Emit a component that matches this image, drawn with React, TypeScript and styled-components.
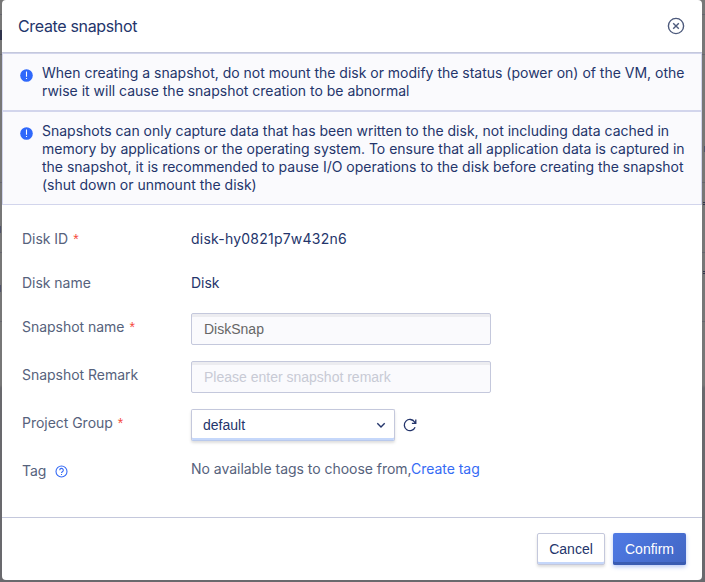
import React from "react";
import styled, { createGlobalStyle } from "styled-components";

const GlobalStyle = createGlobalStyle`
  * { box-sizing: border-box; }
  body {
    margin: 0;
    overflow: hidden;
    font: 14px/18px Inter, sans-serif;
    letter-spacing: -0.03px;
    color: #24356b;
  }
`;

const Backdrop = styled.div`
  position: relative;
  width: 705px;
  height: 582px;
  padding: 0 3px 2px 2px;
  overflow: hidden;
  background: linear-gradient(#777777 0 385px, #69696d 388px);
`;

const PageRule = styled.i<{ $y: number; $side: "left" | "right" }>`
  position: absolute;
  top: ${(p) => p.$y}px;
  ${(p) => p.$side}: 0;
  width: 3px;
  height: 1px;
  background: #66666f;
`;

const PageMark = styled.i<{ $y: number; $h: number; $side: "left" | "right"; $faint?: boolean }>`
  position: absolute;
  top: ${(p) => p.$y}px;
  ${(p) => p.$side}: 0;
  width: ${(p) => (p.$faint ? 1 : 2)}px;
  height: ${(p) => p.$h}px;
  background: ${(p) => (p.$faint ? "#50546a" : "#30344c")};
`;

const Dialog = styled.section`
  position: relative;
  width: 700px;
  height: 580px;
  display: flex;
  flex-direction: column;
  background: #fff;
  border-radius: 4px;
  overflow: hidden;
`;

const Header = styled.header`
  height: 53px;
  flex: none;
  display: flex;
  align-items: center;
  justify-content: space-between;
  padding: 0 17px 0 16px;
  border-bottom: 1px solid #c4c8dc;
`;

const Title = styled.h1`
  margin: 0;
  font-size: 16px;
  line-height: 24px;
  font-weight: 400;
  letter-spacing: -0.34px;
`;

const IconButton = styled.button`
  display: flex;
  padding: 0;
  border: 0;
  background: none;
  color: inherit;
`;

const Alert = styled.div`
  display: flex;
  gap: 9px;
  padding: 10px 0 10px 17px;
  background: #fafafd;
  border: 1px solid #d2d5ec;
  svg { flex: none; margin-top: 5px; }
`;

const Line = styled.span`
  display: block;
  white-space: nowrap;
  letter-spacing: -0.008px;
`;

const Form = styled.div`
  flex: 1;
  padding: 25px 20px 0;
`;

const Row = styled.div<{ $height: number }>`
  height: ${(p) => p.$height}px;
  display: grid;
  grid-template-columns: 169px 1fr;
  align-items: start;
`;

const Label = styled.label`
  display: flex;
  align-items: center;
  color: #56627c;
`;

const DiskId = styled.span`
  letter-spacing: 0.22px;
`;

const Required = styled.span`
  margin-left: 5px;
  font-family: "Liberation Sans", sans-serif;
  color: #f5483b;
`;

const HelpIcon = styled.svg`
  margin: 1px 0 0 9px;
`;

const Input = styled.input`
  width: 300px;
  height: 32px;
  margin-top: -5px;
  padding: 0 12px;
  border: 1px solid #c4c8dc;
  border-radius: 2px;
  outline: 0;
  background: #fafafd;
  box-shadow: inset 0 3px #ececf0;
  font: 14px "Liberation Sans", sans-serif;
  color: #666;
  &::placeholder { color: #c8cad5; opacity: 1; }
`;

const Picker = styled.div`
  display: flex;
  align-items: center;
  gap: 8px;
  margin-top: -5px;
`;

const Select = styled.button`
  width: 204px;
  height: 32px;
  display: flex;
  align-items: center;
  justify-content: space-between;
  padding: 0 8px 0 11px;
  border: 1px solid #c4c8dc;
  border-bottom-color: #b9c9ec;
  border-radius: 2px;
  background: #fff;
  box-shadow: inset 0 -2px #c5d7fa, 0 2px 3px #0002;
  font: 14px "Liberation Sans", sans-serif;
  color: #24356b;
`;

const TagNote = styled.div`
  margin-top: -2px;
  color: #56627c;
`;

const Link = styled.a`
  color: #366bf5;
`;

const Footer = styled.footer`
  height: 63px;
  flex: none;
  display: flex;
  justify-content: flex-end;
  gap: 8px;
  padding: 15px 16px 0;
  border-top: 1px solid #c4c8dc;
`;

const Button = styled.button<{ $primary?: boolean }>`
  width: ${(p) => (p.$primary ? 73 : 68)}px;
  height: 32px;
  padding: 0;
  border: ${(p) => (p.$primary ? "0" : "1px solid #c4c8dc")};
  border-radius: 2px;
  background: ${(p) => (p.$primary ? "linear-gradient(135deg, #4f7ae5, #4266c3)" : "#fff")};
  color: ${(p) => (p.$primary ? "#fff" : "#24356b")};
  box-shadow: ${(p) =>
    p.$primary ? "inset 0 -3px #3a5cb2, 0 2px 4px #4f7ae566" : "inset 0 -2px #c5d7fa, 0 2px 3px #0002"};
  font: 14px "Liberation Sans", sans-serif;
`;

const InfoIcon = () => (
  <svg width="13" height="13" viewBox="0 0 13 13">
    <circle cx="6.5" cy="6.5" r="6.3" fill="#2f68fb" />
    <path d="M6.5 2.5v5.2M6.5 8.9v1.2" stroke="#fff" strokeWidth="1.1" />
  </svg>
);

const Star = () => <Required>*</Required>;

export default function App() {
  return (
    <Backdrop>
      <GlobalStyle />
      {[14, 54, 182, 252, 321].map((y) => (
        <React.Fragment key={y}>
          <PageRule $y={y} $side="left" />
          <PageRule $y={y} $side="right" />
        </React.Fragment>
      ))}
      <PageMark $y={30} $h={10} $side="left" />
      <PageMark $y={226} $h={7} $side="left" $faint />
      <PageMark $y={285} $h={7} $side="left" $faint />
      <PageMark $y={146} $h={6} $side="right" $faint />
      {[203, 272].map((y) => (
        <React.Fragment key={y}>
          <PageMark $y={y - 1} $h={1} $side="right" />
          <PageMark $y={y + 1} $h={1} $side="right" />
        </React.Fragment>
      ))}
      <Dialog>
        <Header>
          <Title>Create snapshot</Title>
          <IconButton aria-label="Close">
            <svg width="18" height="18" viewBox="0 0 18 18" fill="none" stroke="#4d5a7c" strokeWidth="1.4">
              <circle cx="9" cy="9" r="7.6" />
              <path d="m6.2 6.2 5.6 5.6m0-5.6-5.6 5.6" />
            </svg>
          </IconButton>
        </Header>
        <Alert>
          <InfoIcon />
          <div>
            <Line>When creating a snapshot, do not mount the disk or modify the status (power on) of the VM, othe</Line>
            <Line>rwise it will cause the snapshot creation to be abnormal</Line>
          </div>
        </Alert>
        <Alert>
          <InfoIcon />
          <div>
            <Line>Snapshots can only capture data that has been written to the disk, not including data cached in</Line>
            <Line>memory by applications or the operating system. To ensure that all application data is captured in</Line>
            <Line>the snapshot, it is recommended to pause I/O operations to the disk before creating the snapshot</Line>
            <Line>(shut down or unmount the disk)</Line>
          </div>
        </Alert>
        <Form>
          <Row $height={44}>
            <Label>Disk ID<Star /></Label>
            <DiskId>disk-hy0821p7w432n6</DiskId>
          </Row>
          <Row $height={44}>
            <Label>Disk name</Label>
            <span>Disk</span>
          </Row>
          <Row $height={48}>
            <Label>Snapshot name<Star /></Label>
            <Input defaultValue="DiskSnap" />
          </Row>
          <Row $height={48}>
            <Label>Snapshot Remark</Label>
            <Input placeholder="Please enter snapshot remark" />
          </Row>
          <Row $height={48}>
            <Label>Project Group<Star /></Label>
            <Picker>
              <Select>
                default
                <svg width="10" height="10" viewBox="0 0 10 10" fill="none" stroke="#24356b" strokeWidth="1.4">
                  <path d="m1.3 3.2 3.7 3.7 3.7-3.7" />
                </svg>
              </Select>
              <IconButton aria-label="Refresh">
                <svg width="14" height="14" viewBox="0 0 14 14" fill="none" stroke="#24356b" strokeWidth="1.3">
                  <path d="M12.1 9.2A5.6 5.6 0 1 1 11.6 4L12.7 5.3M12.8 1.4v4H8.9" />
                </svg>
              </IconButton>
            </Picker>
          </Row>
          <Row $height={30}>
            <Label>
              Tag
              <HelpIcon width="13" height="13" viewBox="0 0 13 13" fill="none" stroke="#366bf5" strokeWidth="1.1">
                <circle cx="6.5" cy="6.5" r="5.5" />
                <path d="M4.7 5.2a1.8 1.8 0 1 1 2.7 1.5c-.6.4-.9.7-.9 1.3M6.5 9v1.1" />
              </HelpIcon>
            </Label>
            <TagNote>
              No available tags to choose from,<Link>Create tag</Link>
            </TagNote>
          </Row>
        </Form>
        <Footer>
          <Button>Cancel</Button>
          <Button $primary>Confirm</Button>
        </Footer>
      </Dialog>
    </Backdrop>
  );
}
